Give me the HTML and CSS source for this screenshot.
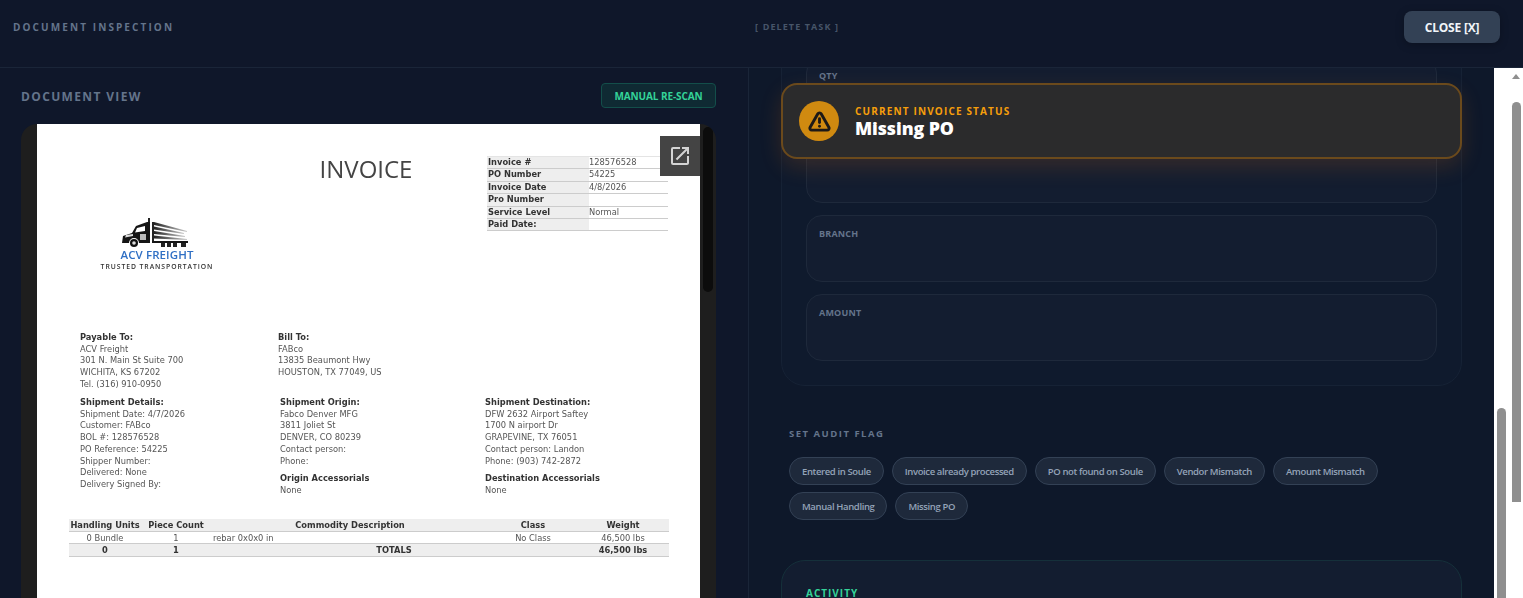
FILE: index.html
```html
<!DOCTYPE html>
<html lang="en">
<head>
    <meta charset="UTF-8">
    <title>Document Inspection</title>
    <link rel="stylesheet" href="styles.css">
</head>
<body>

    <!-- Top bar -->
    <header class="topbar">
        <span class="topbar-title">DOCUMENT INSPECTION</span>
        <span class="delete-task">[ DELETE TASK ]</span>
        <button class="close-btn">CLOSE [X]</button>
    </header>

    <div class="workspace">

        <!-- Document side -->
        <section class="doc-pane">
            <div class="doc-head">
                <h2>DOCUMENT VIEW</h2>
                <button class="rescan-btn">MANUAL RE-SCAN</button>
            </div>

            <div class="doc-frame">
                <div class="doc-page">
                    <div class="doc-top">
                        <div class="logo">
                            <svg class="truck" width="66" height="30" viewBox="0 0 66 30">
                                <defs>
                                    <linearGradient id="streak">
                                        <stop offset="0" stop-color="#222"/>
                                        <stop offset="1" stop-color="#ccc"/>
                                    </linearGradient>
                                </defs>
                                <path d="M26 0H28V5H26Z" fill="#222"/>
                                <path d="M0 25 1 18 10 15 14 8 25 4 28 4 28 25 17 25A5 5 0 0 0 7 25Z" fill="#151515"/>
                                <path d="M15 10 23 8V13L13 14.500Z" fill="#fff"/>
                                <path d="M4 17 11 16V18L3 19.500Z" fill="#ddd"/>
                                <path d="M18 16H24V22H18Z" fill="#bbb"/>
                                <path d="M30 4H32V25H30Z" fill="#222"/>
                                <path d="M32 4 65 13V14L32 7Z" fill="url(#streak)"/>
                                <path d="M32 8.500 62 15V16L32 11.500Z" fill="url(#streak)"/>
                                <path d="M32 13 63 18V19L32 16Z" fill="url(#streak)"/>
                                <path d="M32 17.500 65 21V22L32 20.500Z" fill="url(#streak)"/>
                                <path d="M30 23H66V25H30Z" fill="#151515"/>
                                <circle cx="12" cy="25" r="4" fill="#111"/>
                                <circle cx="12" cy="25" r="1.800" fill="#ddd"/>
                                <rect x="39" y="25" width="4" height="4" fill="#222"/>
                                <rect x="45" y="25" width="4" height="4" fill="#222"/>
                                <rect x="51" y="25" width="4" height="4" fill="#222"/>
                                <rect x="59" y="25" width="5" height="4" fill="#222"/>
                            </svg>
                            <div class="logo-name">ACV FREIGHT</div>
                            <div class="logo-sub">TRUSTED TRANSPORTATION</div>
                        </div>
                        <h1 class="invoice-title">INVOICE</h1>
                        <table class="info-table">
                            <tr><th>Invoice #</th><td>128576528</td></tr>
                            <tr><th>PO Number</th><td>54225</td></tr>
                            <tr><th>Invoice Date</th><td>4/8/2026</td></tr>
                            <tr><th>Pro Number</th><td></td></tr>
                            <tr><th>Service Level</th><td>Normal</td></tr>
                            <tr><th>Paid Date:</th><td></td></tr>
                        </table>
                    </div>

                    <div class="address-row">
                        <div class="address address-pay">
                            <b>Payable To:</b>
                            <p>ACV Freight</p>
                            <p>301 N. Main St Suite 700</p>
                            <p>WICHITA, KS 67202</p>
                            <p>Tel. (316) 910-0950</p>
                        </div>
                        <div class="address">
                            <b>Bill To:</b>
                            <p>FABco</p>
                            <p>13835 Beaumont Hwy</p>
                            <p>HOUSTON, TX 77049, US</p>
                        </div>
                    </div>

                    <div class="shipment-row">
                        <div class="address address-ship">
                            <b>Shipment Details:</b>
                            <p>Shipment Date: 4/7/2026</p>
                            <p>Customer: FABco</p>
                            <p>BOL #: 128576528</p>
                            <p>PO Reference: 54225</p>
                            <p>Shipper Number:</p>
                            <p>Delivered: None</p>
                            <p>Delivery Signed By:</p>
                        </div>
                        <div class="address address-origin">
                            <b>Shipment Origin:</b>
                            <p>Fabco Denver MFG</p>
                            <p>3811 Joliet St</p>
                            <p>DENVER, CO 80239</p>
                            <p>Contact person:</p>
                            <p>Phone:</p>
                            <b class="accessorials">Origin Accessorials</b>
                            <p>None</p>
                        </div>
                        <div class="address">
                            <b>Shipment Destination:</b>
                            <p>DFW 2632 Airport Saftey</p>
                            <p>1700 N airport Dr</p>
                            <p>GRAPEVINE, TX 76051</p>
                            <p>Contact person: Landon</p>
                            <p>Phone: (903) 742-2872</p>
                            <b class="accessorials">Destination Accessorials</b>
                            <p>None</p>
                        </div>
                    </div>

                    <table class="items-table">
                        <colgroup>
                            <col class="col-units"><col class="col-count"><col class="col-desc"><col class="col-class"><col class="col-weight">
                        </colgroup>
                        <tr class="shaded">
                            <th>Handling Units</th><th>Piece Count</th><th>Commodity Description</th><th>Class</th><th>Weight</th>
                        </tr>
                        <tr>
                            <td>0 Bundle</td><td>1</td><td class="desc">rebar 0x0x0 in</td><td>No Class</td><td>46,500 lbs</td>
                        </tr>
                        <tr class="shaded">
                            <th>0</th><th>1</th><th colspan="2">TOTALS</th><th>46,500 lbs</th>
                        </tr>
                    </table>
                </div>

                <button class="popout-btn">
                    <svg width="24" height="24" viewBox="0 0 24 24" fill="#d4d4d4">
                        <path d="M19 19H5V5h7V3H5a2 2 0 0 0-2 2v14a2 2 0 0 0 2 2h14c1.100 0 2-.9 2-2v-7h-2v7zM14 3v2h3.590l-9.830 9.830 1.410 1.410L19 6.410V10h2V3h-7z"/>
                    </svg>
                </button>
                <div class="pdf-thumb"></div>
            </div>
        </section>

        <!-- Form side -->
        <section class="form-pane">
            <div class="status-banner">
                <div class="status-icon">
                    <svg width="23" height="23" viewBox="0 0 24 24" fill="none" stroke="#1c1917" stroke-width="3" stroke-linecap="round" stroke-linejoin="round">
                        <path d="M21.730 18l-8-14a2 2 0 0 0-3.480 0l-8 14A2 2 0 0 0 4 21h16a2 2 0 0 0 1.730-3z"/>
                        <path d="M12 9v4"/>
                        <path d="M12 17h.01"/>
                    </svg>
                </div>
                <div>
                    <div class="status-label">CURRENT INVOICE STATUS</div>
                    <div class="status-value">Missing PO</div>
                </div>
            </div>

            <div class="form-scroll">
                <div class="fields-card">
                    <div class="field"><label>QTY</label></div>
                    <div class="field"></div>
                    <div class="field"><label>BRANCH</label></div>
                    <div class="field"><label>AMOUNT</label></div>
                </div>

                <div class="audit">
                    <h3>SET AUDIT FLAG</h3>
                    <div class="chips">
                        <button class="chip">Entered in Soule</button>
                        <button class="chip">Invoice already processed</button>
                        <button class="chip">PO not found on Soule</button>
                        <button class="chip">Vendor Mismatch</button>
                        <button class="chip">Amount Mismatch</button>
                        <button class="chip">Manual Handling</button>
                        <button class="chip">Missing PO</button>
                    </div>
                </div>

                <div class="activity-card">
                    <h3>ACTIVITY</h3>
                </div>
            </div>
        </section>

        <!-- Scrollbars -->
        <div class="scrollbars">
            <div class="track track-inner"><div class="thumb"></div></div>
            <div class="track track-outer">
                <div class="arrow"></div>
                <div class="thumb"></div>
            </div>
        </div>
    </div>

</body>
</html>
```

FILE: styles.css
```css
* {
    margin: 0;
    padding: 0;
    box-sizing: border-box;
}

html, body {
    height: 100%;
    overflow: hidden;
}

body {
    font-family: "Open Sans", Arial, sans-serif;
    background-color: #0f172a;
    display: flex;
    flex-direction: column;
}

button {
    font-family: inherit;
    border: none;
}

/* Top bar */
.topbar {
    height: 68px;
    flex-shrink: 0;
    display: flex;
    justify-content: space-between;
    align-items: flex-start;
    padding: 11px 23px 0 13px;
    border-bottom: 1px solid #1a2538;
}

.topbar-title {
    margin-top: 9px;
    font-size: 10px;
    font-weight: 700;
    letter-spacing: 2.100px;
    color: #64748b;
}

.delete-task {
    margin: 9px 0 0 16px;
    font-size: 9px;
    font-weight: 700;
    letter-spacing: 1.100px;
    color: #475569;
}

.close-btn {
    width: 96px;
    height: 32px;
    background-color: #334155;
    color: #f1f5f9;
    font-size: 12px;
    font-weight: 700;
    letter-spacing: -0.2px;
    border-radius: 8px;
    box-shadow: 0 2px 8px rgba(0, 0, 0, 0.25);
}

.workspace {
    flex: 1;
    display: flex;
    min-height: 0;
}

/* Document side */
.doc-pane {
    width: 749px;
    flex-shrink: 0;
    padding: 15px 32px 0 21px;
    border-right: 1px solid #1a2538;
    display: flex;
    flex-direction: column;
}

.doc-head {
    display: flex;
    justify-content: space-between;
    align-items: center;
    margin-bottom: 16px;
}

.doc-head h2 {
    padding-top: 1px;
    font-size: 12px;
    font-weight: 700;
    letter-spacing: 1.350px;
    color: #64748b;
}

.rescan-btn {
    width: 115px;
    height: 25px;
    background-color: #0f2a33;
    border: 1px solid #134e4a;
    border-radius: 4px;
    color: #34d399;
    font-size: 10px;
    font-weight: 700;
    letter-spacing: -0.1px;
}

.doc-frame {
    position: relative;
    flex: 1;
    min-height: 0;
    overflow: hidden;
    padding: 0 16px;
    background-color: #1e1e1e;
    border-radius: 16px 16px 0 0;
}

.doc-page {
    height: 100%;
    padding: 32px 32px 0;
    background-color: #fff;
    font-family: "DejaVu Sans", Verdana, sans-serif;
    font-size: 8.300px;
    line-height: 11.700px;
    color: #555;
    filter: blur(0.35px);
}

.doc-top {
    display: flex;
    height: 176px;
}

.logo {
    width: 176px;
    padding-top: 62px;
    text-align: center;
}

.truck {
    display: block;
    margin: 0 auto 0 53px;
}

.logo-name {
    font-family: "Open Sans", sans-serif;
    font-size: 11.500px;
    font-weight: 600;
    line-height: 13px;
    letter-spacing: 0.1px;
    color: #2f6fc4;
}

.logo-sub {
    margin-top: 1px;
    font-family: "Open Sans", sans-serif;
    font-size: 6.800px;
    font-weight: 600;
    line-height: 9px;
    letter-spacing: 0.95px;
    color: #333;
}

.invoice-title {
    flex: 1;
    text-align: center;
    font-family: "Open Sans", sans-serif;
    font-size: 24px;
    font-weight: 400;
    line-height: 25px;
    color: #444;
}

.info-table {
    width: 181px;
    height: 74px;
    border-collapse: collapse;
    table-layout: fixed;
    line-height: 11.400px;
}

.info-table th {
    width: 102px;
    background-color: #eee;
    text-align: left;
    padding-left: 1px;
    font-weight: 700;
    color: #333;
}

.info-table th,
.info-table td {
    border-bottom: 1px solid #ccc;
}

.info-table tr:first-child th,
.info-table tr:first-child td {
    border-top: 1px solid #e4e4e4;
}

.address-row {
    display: flex;
    padding-left: 11px;
    height: 65px;
}

.address-pay {
    width: 198px;
}

.address b {
    display: block;
    color: #333;
}

.shipment-row {
    display: flex;
    padding-left: 11px;
    height: 122px;
}

.address-ship {
    width: 200px;
}

.address-origin {
    width: 205px;
}

.accessorials {
    margin-top: 6px;
}

.items-table {
    width: 600px;
    border-collapse: collapse;
    table-layout: fixed;
    line-height: 10.600px;
    text-align: center;
}

.col-units { width: 72px; }
.col-count { width: 70px; }
.col-desc { width: 278px; }
.col-class { width: 88px; }
.col-weight { width: 92px; }

.items-table tr {
    border-bottom: 1px solid #ccc;
}

.items-table .shaded {
    background-color: #eee;
    color: #333;
}

.items-table th,
.items-table td {
    padding: 1px 0 0;
    text-align: center;
}

.items-table .desc {
    text-align: left;
    padding-left: 2px;
}

.popout-btn {
    position: absolute;
    top: 12px;
    right: 16px;
    width: 40px;
    height: 40px;
    background-color: #444;
    display: flex;
    align-items: center;
    justify-content: center;
}

.pdf-thumb {
    position: absolute;
    top: 3px;
    right: 3px;
    width: 10px;
    height: 165px;
    background-color: #0c0c0c;
    border-radius: 5px;
}

/* Form side */
.form-pane {
    position: relative;
    flex: 1;
    min-width: 0;
    overflow: hidden;
    padding: 0 32px;
    background-color: #0e182a;
}

/* list is scrolled a little past its top edge */
.form-scroll {
    margin-top: -36px;
}

.status-banner {
    position: absolute;
    top: 15px;
    left: 32px;
    right: 32px;
    z-index: 2;
    height: 76px;
    display: flex;
    align-items: center;
    gap: 16px;
    padding-left: 16px;
    background-color: #2b2b2c;
    border: 2px solid #6b4a1c;
    border-radius: 16px;
    box-shadow: 0 8px 22px rgba(245, 120, 11, 0.16);
}

.status-icon {
    width: 40px;
    height: 40px;
    border-radius: 50%;
    background-color: #d08a10;
    display: flex;
    align-items: center;
    justify-content: center;
}

.status-label {
    font-size: 10px;
    font-weight: 700;
    line-height: 14px;
    letter-spacing: 1.150px;
    color: #f59e0b;
}

.status-value {
    font-size: 17.800px;
    font-weight: 800;
    line-height: 20px;
    letter-spacing: -0.1px;
    color: #fff;
}

.fields-card {
    padding: 24px;
    border: 1px solid #162235;
    border-radius: 24px;
    background-color: #0f1a2d;
    display: flex;
    flex-direction: column;
    gap: 12px;
}

.field {
    height: 67px;
    padding: 12px;
    border: 1px solid #1e293b;
    border-radius: 16px;
    background-color: #131d30;
}

.field label {
    display: block;
    font-size: 9px;
    font-weight: 700;
    line-height: 12px;
    letter-spacing: 0.2px;
    color: #64748b;
}

.audit {
    margin: 40px 0;
    padding-left: 8px;
}

.audit h3 {
    height: 16px;
    margin-bottom: 15px;
    font-size: 9.500px;
    font-weight: 700;
    line-height: 16px;
    letter-spacing: 1.500px;
    color: #64748b;
}

.chips {
    display: flex;
    flex-wrap: wrap;
    gap: 7px 8px;
}

.chip {
    height: 28px;
    padding: 0 12px;
    background-color: #1e293b;
    border: 1px solid #334155;
    border-radius: 14px;
    color: #94a3b8;
    font-size: 9.500px;
    font-weight: 600;
    letter-spacing: -0.38px;
}

.activity-card {
    height: 200px;
    padding: 26px 24px;
    background-color: #131d30;
    border: 1px solid #15303a;
    border-radius: 24px;
}

.activity-card h3 {
    font-size: 10px;
    font-weight: 700;
    line-height: 12px;
    letter-spacing: 1px;
    color: #34d399;
}

/* Scrollbars */
.scrollbars {
    width: 29px;
    flex-shrink: 0;
    display: flex;
    background-color: #fff;
    padding-left: 3px;
    gap: 6px;
}

.track {
    position: relative;
    width: 9px;
    flex-shrink: 0;
}

.track-inner {
    padding-top: 340px;
}

.track-outer {
    padding-top: 34px;
}

.thumb {
    height: 400px;
    background-color: #8f8f8f;
    border-radius: 5px 5px 0 0;
}

.arrow {
    position: absolute;
    top: 6px;
    left: 0;
    border-left: 4.500px solid transparent;
    border-right: 4.500px solid transparent;
    border-bottom: 5px solid #8f8f8f;
}
```
